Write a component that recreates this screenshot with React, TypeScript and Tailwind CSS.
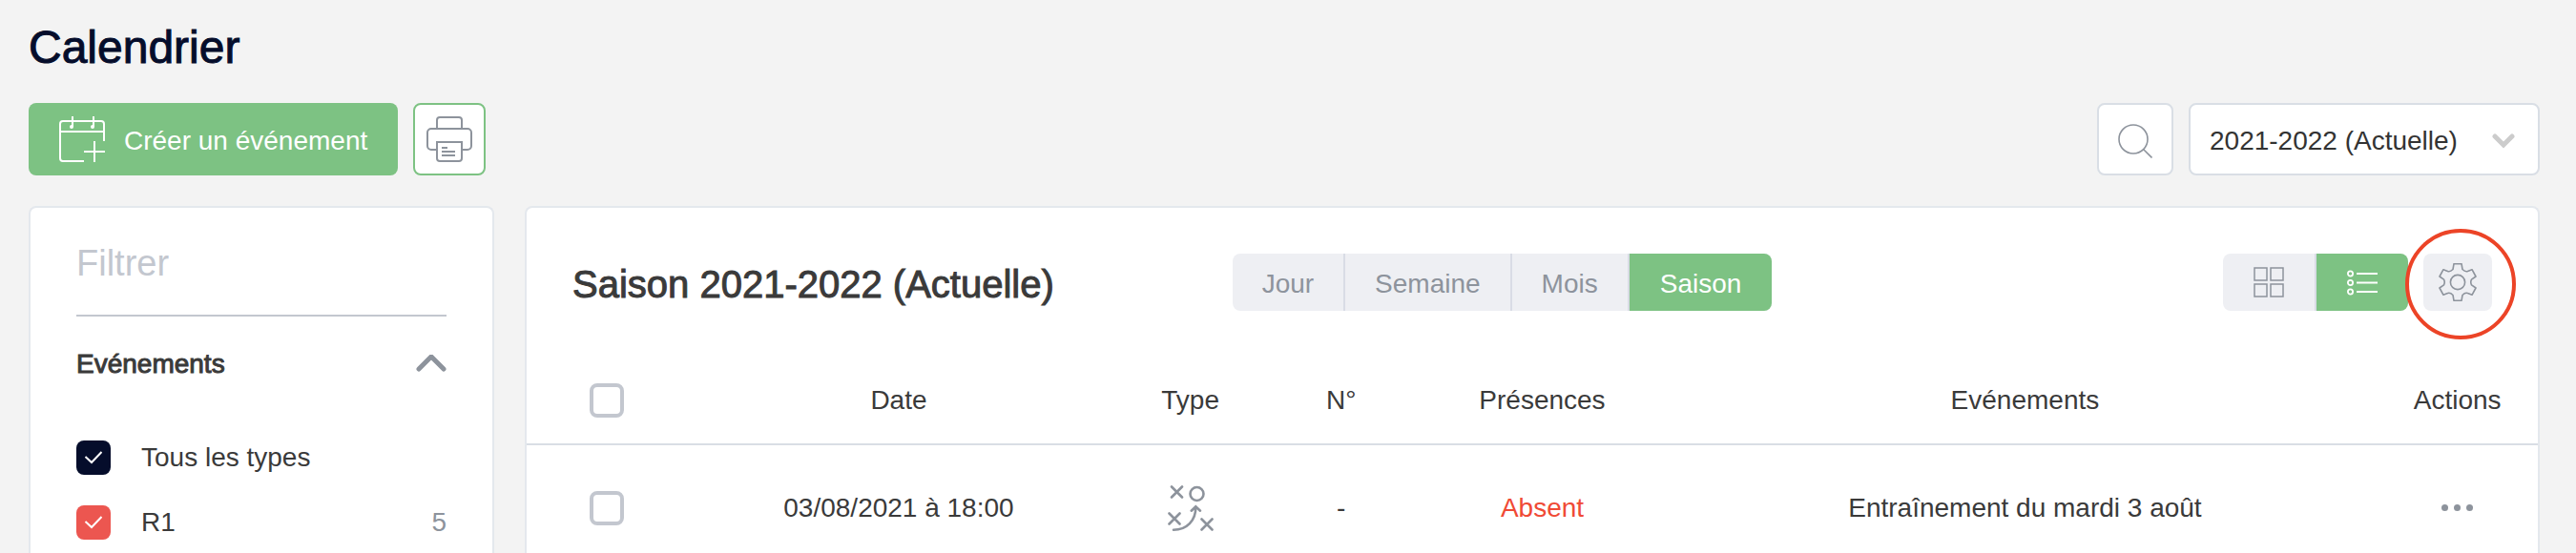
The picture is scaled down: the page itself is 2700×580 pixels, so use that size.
import React from 'react';

interface Filter {
    id: string;
    label: string;
    color: string;
    count?: number;
}

interface CalendarEvent {
    id: number;
    date: string;
    number: string;
    presence: string;
    title: string;
}

const filters: Filter[] = [
    { id: 'all', label: 'Tous les types', color: 'bg-[#050d2b]' },
    { id: 'r1', label: 'R1', color: 'bg-[#ec5650]', count: 5 },
];

const events: CalendarEvent[] = [
    { id: 1, date: '03/08/2021 à 18:00', number: '-', presence: 'Absent', title: 'Entraînement du mardi 3 août' },
];

const periods = ['Jour', 'Semaine', 'Mois', 'Saison'];

const CalendarPlusIcon = () => (
    <svg className="size-12 shrink-0" viewBox="0 0 48 48" fill="none" stroke="currentColor" strokeWidth="2" aria-hidden="true">
        <path d="M26 47H4a3 3 0 0 1-3-3V8a3 3 0 0 1 3-3h40a3 3 0 0 1 3 3v18M1 16h46M14 0v11M36 0v11M26 37h22M37 26v22" />
        <circle cx="13" cy="11" r="2" fill="currentColor" stroke="none" />
        <circle cx="35" cy="11" r="2" fill="currentColor" stroke="none" />
    </svg>
);

const PrinterIcon = () => (
    <svg className="size-12" viewBox="0 0 48 48" fill="none" stroke="currentColor" strokeWidth="2" aria-hidden="true">
        <path d="M11 13V4a3 3 0 0 1 3-3h20a3 3 0 0 1 3 3v9" />
        <path d="M11 35H5a4 4 0 0 1-4-4V17a4 4 0 0 1 4-4h38a4 4 0 0 1 4 4v14a4 4 0 0 1-4 4h-6" />
        <path d="M11 27h26v17a3 3 0 0 1-3 3H14a3 3 0 0 1-3-3zM16 33h6M16 37h14M16 41h14" />
    </svg>
);

const SearchIcon = () => (
    <svg className="size-9" viewBox="0 0 36 36" fill="none" stroke="currentColor" strokeWidth="1.6" aria-hidden="true">
        <circle cx="16" cy="16" r="15" />
        <path d="m26.500 26.500 9 9" />
    </svg>
);

const GridIcon = () => (
    <svg className="size-8" viewBox="0 0 32 32" fill="none" stroke="currentColor" strokeWidth="1.5" aria-hidden="true">
        <path d="M1 1h13v13H1zM18 1h13v13H18zM1 18h13v13H1zM18 18h13v13H18z" />
    </svg>
);

const ListIcon = () => (
    <svg className="size-8" viewBox="0 0 32 32" fill="none" stroke="currentColor" strokeWidth="1.8" aria-hidden="true">
        <circle cx="3.5" cy="7" r="2.6" />
        <circle cx="3.5" cy="16.5" r="2.6" />
        <circle cx="3.5" cy="26" r="2.6" />
        <path d="M10 7h22M10 16.500h22M10 26h22" />
    </svg>
);

const GearIcon = () => (
    <svg className="size-10" viewBox="-20 -20 40 40" fill="none" stroke="currentColor" strokeWidth="1.6" strokeLinejoin="round" aria-hidden="true">
        <path d="M-4-19.300H4L5-13.500Q8-10.500 10.500-11.600L15-13.300L19-6L14.500-2.800Q13 0 14.500 2.800L19 6L15 13.300L10.500 11.600Q8 10.500 5 13.500L4 19.300H-4L-5 13.500Q-8 10.500-10.500 11.600L-15 13.300L-19 6L-14.500 2.800Q-13 0-14.500-2.800L-19-6L-15-13.300L-10.500-11.600Q-8-10.500-5-13.500Z" />
        <circle r="7.6" />
    </svg>
);

const TacticsIcon = () => (
    <svg className="mx-auto size-12" viewBox="0 0 48 48" fill="none" stroke="currentColor" strokeWidth="2.6" strokeLinecap="round" role="img" aria-label="Entraînement">
        <path d="m4 1.500 11 11m0-11-11 11M1.500 29.500l11 11m0-11-11 11M35.500 35.500l11 11m0-11-11 11" />
        <circle cx="30.5" cy="9" r="7" />
        <path d="M6 46.700C20 46.700 29.300 37 29.300 23M24.700 26.700l4.600-4.400 4.700 4.400" />
    </svg>
);

const Checkbox: React.FC<{ label: string }> = ({ label }) => (
    <input
        type="checkbox"
        aria-label={label}
        className="mx-auto block size-9 appearance-none rounded-lg border-4 border-[#c3c7cf] bg-white"
    />
);

const FilterRow: React.FC<{ filter: Filter }> = ({ filter }) => (
    <label className="flex items-center">
        <span className="relative size-9">
            <input type="checkbox" defaultChecked className={`block size-9 appearance-none rounded-lg ${filter.color}`} />
            <svg className="pointer-events-none absolute inset-0 size-9 text-white" viewBox="0 0 36 36" fill="none" stroke="currentColor" strokeWidth="2" aria-hidden="true">
                <path d="m9.500 17 6.500 6 10.500-11" />
            </svg>
        </span>
        <span className="ml-8">{filter.label}</span>
        {filter.count !== undefined && <span className="ml-auto text-[#8d939c]">{filter.count}</span>}
    </label>
);

const Sidebar = () => (
    <aside className="w-[488px] shrink-0 rounded-t-lg border-2 border-b-0 border-[#e4e8ed] bg-white px-12">
        <input
            type="text"
            placeholder="Filtrer"
            aria-label="Filtrer"
            className="block h-[114px] w-full border-b-2 border-[#c3c7cf] pt-1 text-[38px] outline-none placeholder:text-[#c3c7cf]"
        />
        <button type="button" aria-expanded="true" className="flex h-[100px] w-full items-center justify-between">
            <span className="[-webkit-text-stroke:1px]">Evénements</span>
            <svg className="h-5 w-8 text-[#8d939c]" viewBox="0 0 32 20" fill="none" stroke="currentColor" strokeWidth="5" strokeLinecap="round" aria-hidden="true">
                <path d="M3 15 16 2l13 13" />
            </svg>
        </button>
        <div className="mt-[30px] flex flex-col gap-8">
            {filters.map((filter) => (
                <FilterRow key={filter.id} filter={filter} />
            ))}
        </div>
    </aside>
);

const EventTable = () => (
    <table className="w-full table-fixed text-center">
        <colgroup>
            <col className="w-[8%]" />
            <col className="w-[21%]" />
            <col className="w-[8%]" />
            <col className="w-[7%]" />
            <col className="w-[13%]" />
            <col />
            <col className="w-[8%]" />
        </colgroup>
        <thead>
            <tr className="h-[92px] border-b-2 border-[#d9dee5]">
                <th><Checkbox label="Tout sélectionner" /></th>
                <th className="font-normal">Date</th>
                <th className="font-normal">Type</th>
                <th className="font-normal">N°</th>
                <th className="font-normal">Présences</th>
                <th className="font-normal">Evénements</th>
                <th className="font-normal">Actions</th>
            </tr>
        </thead>
        <tbody>
            {events.map((event) => (
                <tr key={event.id} className="h-[132px]">
                    <td><Checkbox label={event.title} /></td>
                    <td>{event.date}</td>
                    <td className="text-[#8d939c]"><TacticsIcon /></td>
                    <td>{event.number}</td>
                    <td className="text-[#f04a35]">{event.presence}</td>
                    <td>{event.title}</td>
                    <td>
                        <button type="button" aria-label="Actions" className="mx-auto flex gap-1.5">
                            <span className="size-[7px] rounded-full bg-[#8d939c]" />
                            <span className="size-[7px] rounded-full bg-[#8d939c]" />
                            <span className="size-[7px] rounded-full bg-[#8d939c]" />
                        </button>
                    </td>
                </tr>
            ))}
        </tbody>
    </table>
);

const PeriodTabs = () => (
    <div className="flex h-[60px] overflow-hidden rounded-lg bg-[#eeeff3] text-[#8d939c]">
        {periods.map((period) => (
            <button
                key={period}
                type="button"
                className={period === 'Saison' ? 'bg-[#7dc283] px-8 pt-1 text-white' : 'border-r-2 border-[#d9dce5] px-[31px] pt-1'}
            >
                {period}
            </button>
        ))}
    </div>
);

export default function App() {
    return (
        <div className="flex h-screen flex-col overflow-hidden bg-[#f3f3f3] pr-[38px] pl-[30px] font-['Liberation_Sans',Arial,sans-serif] text-[28px] leading-9 text-[#3a3a3a]">
            <h1 className="pt-5 text-[48px] leading-[60px] text-[#050d2b] [-webkit-text-stroke:1px]">Calendrier</h1>

            <div className="mt-7 flex h-[76px] shrink-0 items-stretch gap-4">
                <button type="button" className="flex items-center gap-5 rounded-lg bg-[#7dc283] px-8 text-white">
                    <CalendarPlusIcon />
                    <span className="pt-1">Créer un événement</span>
                </button>
                <button type="button" aria-label="Imprimer" className="flex w-[76px] items-center justify-center rounded-lg border-2 border-[#7dc283] bg-white text-[#8d939c]">
                    <PrinterIcon />
                </button>
                <button type="button" aria-label="Rechercher" className="ml-auto flex w-20 items-center justify-center rounded-lg border-2 border-[#d9dee5] bg-white pt-1 text-[#8d939c]">
                    <SearchIcon />
                </button>
                <div className="relative w-[368px]">
                    <select aria-label="Saison" className="size-full appearance-none rounded-lg border-2 border-[#d9dee5] bg-white pt-1 pl-5 text-[#333]">
                        <option>2021-2022 (Actuelle)</option>
                    </select>
                    <svg className="pointer-events-none absolute top-8 right-[26px] h-4 w-6 text-[#ccc]" viewBox="0 0 24 16" fill="none" stroke="currentColor" strokeWidth="5" strokeLinecap="round" aria-hidden="true">
                        <path d="m3 3 9 9 9-9" />
                    </svg>
                </div>
            </div>

            <div className="mt-8 flex flex-1 gap-8">
                <Sidebar />
                <main className="min-w-0 flex-1 rounded-t-lg border-2 border-b-0 border-[#e4e8ed] bg-white">
                    <div className="mx-12 grid h-[156px] grid-cols-[11fr_21fr] items-center">
                        <h2 className="pt-1 text-[40px] whitespace-nowrap [-webkit-text-stroke:1px]">Saison 2021-2022 (Actuelle)</h2>
                        <div className="flex items-center justify-between">
                            <PeriodTabs />
                            <div className="flex gap-4 text-[#8d939c]">
                                <div className="flex h-[60px] overflow-hidden rounded-lg">
                                    <button type="button" aria-label="Grille" className="flex w-[98px] items-center justify-center border-r-2 border-[#d9dce5] bg-[#eeeff3]">
                                        <GridIcon />
                                    </button>
                                    <button type="button" aria-label="Liste" className="flex w-24 items-center justify-center bg-[#7dc283] text-white">
                                        <ListIcon />
                                    </button>
                                </div>
                                <div className="relative">
                                    <button type="button" aria-label="Paramètres" className="flex h-[60px] w-[72px] items-center justify-center rounded-lg bg-[#eeeff3]">
                                        <GearIcon />
                                    </button>
                                    <span className="pointer-events-none absolute -top-[26px] -left-[19px] size-[116px] rounded-full border-4 border-[#ec4427]" />
                                </div>
                            </div>
                        </div>
                    </div>
                    <EventTable />
                </main>
            </div>
        </div>
    );
}
